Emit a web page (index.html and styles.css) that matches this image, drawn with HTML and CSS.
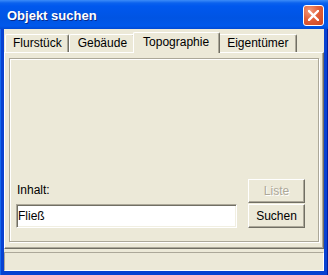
FILE: index.html
```html
<!DOCTYPE html>
<html lang="de">
<head>
    <meta charset="UTF-8">
    <meta name="viewport" content="width=device-width, initial-scale=1.0">
    <title>Objekt suchen</title>
    <link rel="stylesheet" href="styles.css">
</head>
<body>
    <div class="window">
        <div class="titlebar">
            <span class="title">Objekt suchen</span>
            <button class="close" aria-label="Schließen">
                <svg width="11" height="11" viewBox="0 0 11 11">
                    <path d="M1 1 L10 10 M10 1 L1 10" stroke="#fff" stroke-width="2.4" stroke-linecap="square"/>
                </svg>
            </button>
        </div>
        <div class="client">
            <div class="tabs">
                <div class="tab">Flurstück</div>
                <div class="tab">Gebäude</div>
                <div class="tab active">Topographie</div>
                <div class="tab">Eigentümer</div>
            </div>
            <div class="panel">
                <div class="frame">
                    <div class="search">
                        <div class="field">
                            <label for="inhalt">Inhalt:</label>
                            <input type="text" id="inhalt" value="Fließ">
                        </div>
                        <div class="actions">
                            <button class="btn" disabled>Liste</button>
                            <button class="btn">Suchen</button>
                        </div>
                    </div>
                </div>
            </div>
            <div class="status"></div>
        </div>
    </div>
</body>
</html>
```

FILE: styles.css
```css
body {
    margin: 0;
    font-family: "Liberation Sans", Arial, sans-serif;
    font-size: 12px;
    background: #ECE9D8;
}
.window {
    width: 328px;
    height: 275px;
    display: flex;
    flex-direction: column;
    background: #0842D1;
    box-shadow: inset 1px 0 #166AEE, inset -1px 0 #001EA0;
}
.titlebar {
    height: 29px;
    display: flex;
    align-items: center;
    justify-content: space-between;
    padding: 1px 4px 0 7px;
    box-sizing: border-box;
    background: linear-gradient(#3C8CF8 0, #0B62EE 3px, #0058EE 6px, #0054E3 18px, #0058EB 26px, #0049D4 29px);
}
.title {
    color: white;
    font-weight: bold;
    font-size: 13px;
    text-shadow: 1px 1px #0A2B8C;
}
.close {
    width: 21px;
    height: 21px;
    padding: 0;
    display: flex;
    align-items: center;
    justify-content: center;
    border: 1px solid white;
    border-radius: 3px;
    background: radial-gradient(circle at 30% 25%, #F29A7C 0, #E2603A 45%, #CC4521 100%);
}
.client {
    flex: 1;
    margin: 0 4px 4px;
    background: #ECE9D8;
    display: flex;
    flex-direction: column;
}
.tabs {
    display: flex;
    align-items: flex-end;
    height: 23px;
    padding: 0 0 0 1px;
    box-sizing: border-box;
}
.tab {
    height: 18px;
    line-height: 17px;
    padding: 0 7px 0 8px;
    border: 1px solid;
    border-color: #fff #716F64 transparent #fff;
    border-bottom: none;
    border-radius: 2px 2px 0 0;
    box-shadow: inset -1px 0 #ACA899;
    box-sizing: border-box;
}
.tab:first-child {
    padding: 0 6px 0 7px;
}
.tab.active {
    position: relative;
    z-index: 1;
    height: 21px;
    line-height: 18px;
    margin: 0 -2px -1px;
    padding: 0 10px 0 9px;
    background: #ECE9D8;
}
.panel {
    flex: 1;
    display: flex;
    padding: 5px 3px 5px 4px;
    border: 1px solid;
    border-color: #fff #716F64 #716F64 #fff;
    box-shadow: inset -1px -1px #ACA899;
}
.frame {
    flex: 1;
    display: flex;
    flex-direction: column;
    justify-content: flex-end;
    margin: 0 1px 1px 0;
    padding: 0 13px 13px 6px;
    border: 1px solid #ACA899;
    box-shadow: inset 1px 1px #fff, 1px 1px #fff;
}
.search {
    display: flex;
    align-items: flex-end;
    gap: 11px;
}
.field {
    flex: 1;
}
.field label {
    display: block;
    line-height: 14px;
    margin: 0 0 7px 1px;
    color: #000;
}
.field input {
    width: 100%;
    height: 24px;
    box-sizing: border-box;
    padding: 0 1px;
    margin: 0;
    border: 1px solid;
    border-color: #ACA899 #fff #fff #ACA899;
    box-shadow: inset 1px 1px #716F64, inset -1px -1px #F1EFE2;
    font-family: inherit;
    font-size: 12px;
    outline: none;
}
.actions {
    width: 57px;
    display: flex;
    flex-direction: column;
    gap: 1px;
}
.btn {
    height: 24px;
    padding: 0;
    border: 1px solid;
    border-color: #fff #716F64 #716F64 #fff;
    box-shadow: inset -1px -1px #ACA899;
    background: #ECE9D8;
    font-family: inherit;
    font-size: 12px;
    color: #000;
}
.btn:disabled {
    color: #ACA899;
    text-shadow: 1px 1px #fff;
}
.status {
    height: 19px;
    margin-top: 3px;
    border: 1px solid;
    border-color: #ACA899 #fff #fff #ACA899;
    box-sizing: border-box;
}
```
